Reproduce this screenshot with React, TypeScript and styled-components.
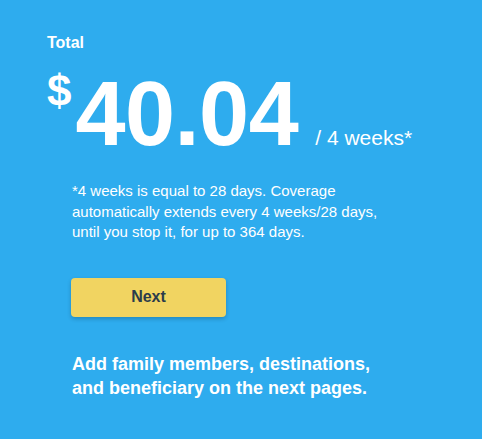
import React from "react";
import styled, { createGlobalStyle } from "styled-components";

const Global = createGlobalStyle`
  html, body {
    margin: 0;
    padding: 0;
    background: #2eacee;
  }
  body {
    font-family: "Liberation Sans", Arial, sans-serif;
    color: #ffffff;
  }
`;

const Page = styled.main`
  min-height: 439px;
  box-sizing: border-box;
  padding: 34px 20px 0 47px;
  background: #2eacee;
`;

const Label = styled.div`
  font-size: 16px;
  line-height: 18px;
  font-weight: 700;
`;

const PriceRow = styled.div`
  display: flex;
  align-items: flex-start;
  margin-top: 17px;
`;

const Currency = styled.span`
  font-size: 44px;
  line-height: 44px;
  font-weight: 700;
  margin-right: 4px;
`;

const AmountGroup = styled.div`
  display: flex;
  align-items: baseline;
`;

const Amount = styled.span`
  font-size: 90px;
  line-height: 90px;
  font-weight: 700;
  letter-spacing: -0.5px;
`;

const Period = styled.span`
  font-size: 21px;
  font-weight: 400;
  margin-left: 17px;
`;

const Body = styled.div`
  padding-left: 25px;
`;

const Note = styled.p`
  margin: 22px 0 0;
  width: 330px;
  font-size: 15px;
  line-height: 20.5px;
`;

const NextButton = styled.button`
  display: flex;
  align-items: center;
  justify-content: center;
  margin: 35px 0 0 -1px;
  width: 155px;
  height: 39px;
  border: none;
  border-radius: 4px;
  background: #f1d461;
  color: #2b3c4b;
  font-family: "Liberation Sans", Arial, sans-serif;
  font-size: 16px;
  font-weight: 700;
  box-shadow: 0 2px 4px rgba(0, 0, 0, 0.2);
  cursor: pointer;
`;

const Closing = styled.p`
  margin: 35px 0 0;
  font-size: 18px;
  line-height: 24px;
  font-weight: 700;
`;

export default function App() {
  return (
    <>
      <Global />
      <Page>
        <Label>Total</Label>
        <PriceRow>
          <Currency>$</Currency>
          <AmountGroup>
            <Amount>40.04</Amount>
            <Period>/ 4 weeks*</Period>
          </AmountGroup>
        </PriceRow>
        <Body>
          <Note>
            *4 weeks is equal to 28 days. Coverage automatically extends every 4
            weeks/28 days, until you stop it, for up to 364 days.
          </Note>
          <NextButton>Next</NextButton>
          <Closing>
            Add family members, destinations,
            <br />
            and beneficiary on the next pages.
          </Closing>
        </Body>
      </Page>
    </>
  );
}
